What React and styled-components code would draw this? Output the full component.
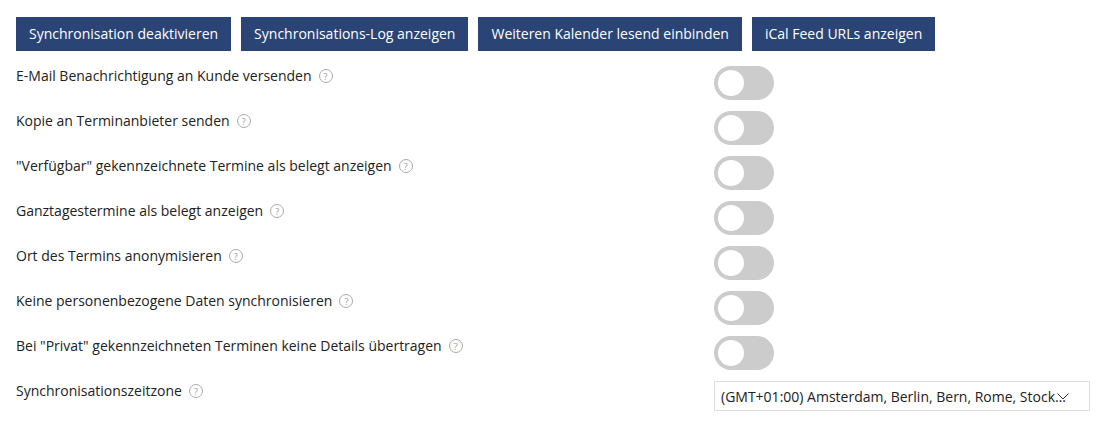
import React from 'react';
import styled, { createGlobalStyle } from 'styled-components';

const GlobalStyle = createGlobalStyle`
  body {
    margin: 0;
    background: #fff;
    font-family: "Open Sans", "Liberation Sans", sans-serif;
    font-size: 14px;
    color: #222;
  }
`;

const Page = styled.div`
  padding: 17px 16px;
`;

const Toolbar = styled.div`
  display: flex;
  gap: 10px;
  margin-bottom: 15px;
`;

const Button = styled.button`
  height: 34px;
  padding: 0 13px;
  border: none;
  background: #2a4476;
  color: #fff;
  font-family: inherit;
  font-size: 14px;
  line-height: 20px;
  cursor: pointer;
`;

const Row = styled.div`
  display: flex;
  align-items: flex-start;
  margin-bottom: 11px;
`;

const Label = styled.div`
  flex: none;
  width: 698px;
  line-height: 20px;
  display: flex;
  align-items: center;
  gap: 7px;
`;

const Help = styled.span`
  display: inline-flex;
  align-items: center;
  justify-content: center;
  width: 12px;
  height: 12px;
  border: 1px solid #aaa;
  border-radius: 50%;
  color: #999;
  font-size: 9px;
  line-height: 1;
`;

const Switch = styled.span`
  position: relative;
  display: block;
  flex: none;
  width: 60px;
  height: 34px;
  border-radius: 17px;
  background: ${({ on }) => (on ? '#2a4476' : '#ccc')};

  &::after {
    content: '';
    position: absolute;
    top: 4px;
    left: ${({ on }) => (on ? '30px' : '4px')};
    width: 26px;
    height: 26px;
    border-radius: 50%;
    background: #fff;
  }
`;

const Select = styled.div`
  position: relative;
  flex: none;
  width: 376px;
  height: 30px;
  box-sizing: border-box;
  border: 1px solid #ddd;
  padding: 0 0 0 6px;
  display: flex;
  align-items: center;
`;

const SelectText = styled.span`
  white-space: nowrap;
  overflow: hidden;
  text-overflow: ellipsis;
  width: 347px;
  flex: none;
`;

const Chevron = styled.svg`
  position: absolute;
  left: 342px;
  top: 11px;
`;

const settings = [
  'E-Mail Benachrichtigung an Kunde versenden',
  'Kopie an Terminanbieter senden',
  '"Verfügbar" gekennzeichnete Termine als belegt anzeigen',
  'Ganztagestermine als belegt anzeigen',
  'Ort des Termins anonymisieren',
  'Keine personenbezogene Daten synchronisieren',
  'Bei "Privat" gekennzeichneten Terminen keine Details übertragen',
];

const App = () => (
  <Page>
    <GlobalStyle />
    <Toolbar>
      <Button>Synchronisation deaktivieren</Button>
      <Button>Synchronisations-Log anzeigen</Button>
      <Button>Weiteren Kalender lesend einbinden</Button>
      <Button>iCal Feed URLs anzeigen</Button>
    </Toolbar>
    {settings.map((s) => (
      <Row key={s}>
        <Label>
          {s}
          <Help>?</Help>
        </Label>
        <Switch />
      </Row>
    ))}
    <Row>
      <Label>
        Synchronisationszeitzone
        <Help>?</Help>
      </Label>
      <Select>
        <SelectText>(GMT+01:00) Amsterdam, Berlin, Bern, Rome, Stockholm, Vienna</SelectText>
        <Chevron width="12" height="7" viewBox="0 0 12 7">
          <path d="M0.5 0.5 L6 6 L11.5 0.5" fill="none" stroke="#333" strokeWidth="1" />
        </Chevron>
      </Select>
    </Row>
  </Page>
);

export default App;
